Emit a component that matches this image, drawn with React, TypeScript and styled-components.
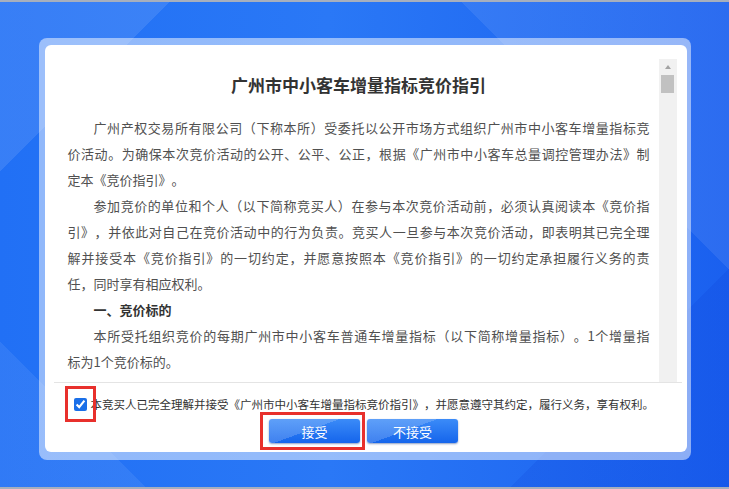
import React, { useState } from 'react';
import styled, { createGlobalStyle } from 'styled-components';

const GlobalStyle = createGlobalStyle`
  html, body, #root {
    margin: 0;
    padding: 0;
    height: 100%;
  }
  body {
    font-family: "Noto Sans CJK SC", "Noto Sans", sans-serif;
    text-spacing-trim: space-all;
  }
`;

const Page = styled.div`
  box-sizing: border-box;
  height: 100%;
  padding-top: 36px;
  display: flex;
  justify-content: center;
  align-items: flex-start;
  border-top: 2px solid #a7afbd;
  border-bottom: 2px solid #a7afbd;
  background:
    linear-gradient(135deg, rgba(255, 255, 255, 0.1) 0 14%, transparent 14%),
    linear-gradient(225deg, rgba(255, 255, 255, 0.08) 0 22%, transparent 22%),
    linear-gradient(45deg, rgba(255, 255, 255, 0.07) 0 12%, transparent 12%),
    linear-gradient(315deg, rgba(0, 40, 200, 0.12) 0 18%, transparent 18%),
    linear-gradient(90deg, #2170f5 0%, #2a78f6 45%, #1a60ef 100%);
`;

const Frame = styled.div`
  width: 652px;
  box-sizing: border-box;
  padding: 7px 4px 8px 6px;
  border-radius: 8px;
  background: rgba(255, 255, 255, 0.5);
`;

const Card = styled.div`
  height: 407px;
  display: flex;
  flex-direction: column;
  background: #fff;
  border-radius: 6px;
  overflow: hidden;
`;

const ScrollBox = styled.div`
  box-sizing: border-box;
  height: 324px;
  margin: 14px 5px 0 9px;
  display: flex;
  border-bottom: 1px solid #e4e4e4;
`;

const TextColumn = styled.div`
  flex: 1;
  min-width: 0;
  padding: 13px 9px 0 14px;
  overflow: hidden;
  color: #505050;
  font-size: 13px;
  line-height: 26px;
`;

const Title = styled.h1`
  margin: 0 0 17px;
  font-size: 17px;
  line-height: 26px;
  font-weight: bold;
  color: #333;
  text-align: center;
`;

const Line = styled.div<{ $indent?: boolean; $last?: boolean }>`
  white-space: nowrap;
  text-indent: ${(p) => (p.$indent ? '2em' : '0')};
  text-align: justify;
  text-align-last: ${(p) => (p.$last ? 'left' : 'justify')};
`;

const Heading = styled.div`
  text-indent: 2em;
  font-weight: bold;
  color: #333;
`;

const Rail = styled.div`
  width: 18px;
  flex-shrink: 0;
  margin-right: 5px;
  background: #f1f1f1;
  display: flex;
  flex-direction: column;
  align-items: center;
`;

const RailArrow = styled.div`
  width: 0;
  height: 0;
  margin-top: 6px;
  border-left: 3px solid transparent;
  border-right: 3px solid transparent;
  border-bottom: 4px solid #a3a3a3;
`;

const RailThumb = styled.div`
  width: 13px;
  height: 18px;
  margin-top: 6px;
  background: #c1c1c1;
`;

const Footer = styled.div`
  padding: 9px 0 9px;
  display: flex;
  flex-direction: column;
  gap: 3px;
`;

const AgreeRow = styled.label`
  height: 24px;
  padding-left: 29px;
  display: flex;
  align-items: center;
  gap: 4px;
  font-size: 11.5px;
  color: #333;
  white-space: nowrap;
`;

const Marked = styled.span<{ $l: number; $r: number; $t: number; $b: number }>`
  position: relative;
  display: inline-flex;
  &::after {
    content: '';
    position: absolute;
    left: ${(p) => -p.$l}px;
    right: ${(p) => -p.$r}px;
    top: ${(p) => -p.$t}px;
    bottom: ${(p) => -p.$b}px;
    border: 3px solid #e8302c;
    pointer-events: none;
  }
`;

const Check = styled.input`
  width: 13px;
  height: 13px;
  margin: 0;
  accent-color: #1a6fe8;
`;

const ButtonRow = styled.div`
  display: flex;
  justify-content: center;
  gap: 7px;
  padding-right: 4px;
`;

const Button = styled.button`
  width: 91px;
  height: 24px;
  padding: 0;
  border: none;
  border-radius: 3px;
  color: #fff;
  font-family: inherit;
  font-size: 13px;
  cursor: pointer;
  background:
    linear-gradient(160deg, rgba(255, 255, 255, 0.18) 0 45%, transparent 45%),
    linear-gradient(180deg, #3b8bf8 0%, #1565ec 100%);
  box-shadow: 0 1px 2px rgba(0, 40, 120, 0.45);
`;

const paragraphs: string[][] = [
  [
    '广州产权交易所有限公司（下称本所）受委托以公开市场方式组织广州市中小客车增量指标竞',
    '价活动。为确保本次竞价活动的公开、公平、公正，根据《广州市中小客车总量调控管理办法》制',
    '定本《竞价指引》。',
  ],
  [
    '参加竞价的单位和个人（以下简称竞买人）在参与本次竞价活动前，必须认真阅读本《竞价指',
    '引》，并依此对自己在竞价活动中的行为负责。竞买人一旦参与本次竞价活动，即表明其已完全理',
    '解并接受本《竞价指引》的一切约定，并愿意按照本《竞价指引》的一切约定承担履行义务的责',
    '任，同时享有相应权利。',
  ],
];

const targetLines = [
  '本所受托组织竞价的每期广州市中小客车普通车增量指标（以下简称增量指标）。1个增量指',
  '标为1个竞价标的。',
];

const Paragraph = ({ lines }: { lines: string[] }) => (
  <div>
    {lines.map((text, i) => (
      <Line key={i} $indent={i === 0} $last={i === lines.length - 1}>
        {text}
      </Line>
    ))}
  </div>
);

const App = () => {
  const [agreed, setAgreed] = useState(true);

  return (
    <Page>
      <GlobalStyle />
      <Frame>
        <Card>
          <ScrollBox>
            <TextColumn>
              <Title>广州市中小客车增量指标竞价指引</Title>
              {paragraphs.map((lines, i) => (
                <Paragraph key={i} lines={lines} />
              ))}
              <Heading>一、竞价标的</Heading>
              <Paragraph lines={targetLines} />
            </TextColumn>
            <Rail>
              <RailArrow />
              <RailThumb />
            </Rail>
          </ScrollBox>
          <Footer>
            <AgreeRow>
              <Marked $l={9} $r={9} $t={12} $b={11}>
                <Check
                  type="checkbox"
                  checked={agreed}
                  onChange={(e) => setAgreed(e.target.checked)}
                />
              </Marked>
              本竞买人已完全理解并接受《广州市中小客车增量指标竞价指引》，并愿意遵守其约定，履行义务，享有权利。
            </AgreeRow>
            <ButtonRow>
              <Marked $l={9} $r={5} $t={7} $b={7}>
                <Button>接受</Button>
              </Marked>
              <Button>不接受</Button>
            </ButtonRow>
          </Footer>
        </Card>
      </Frame>
    </Page>
  );
};

export default App;
